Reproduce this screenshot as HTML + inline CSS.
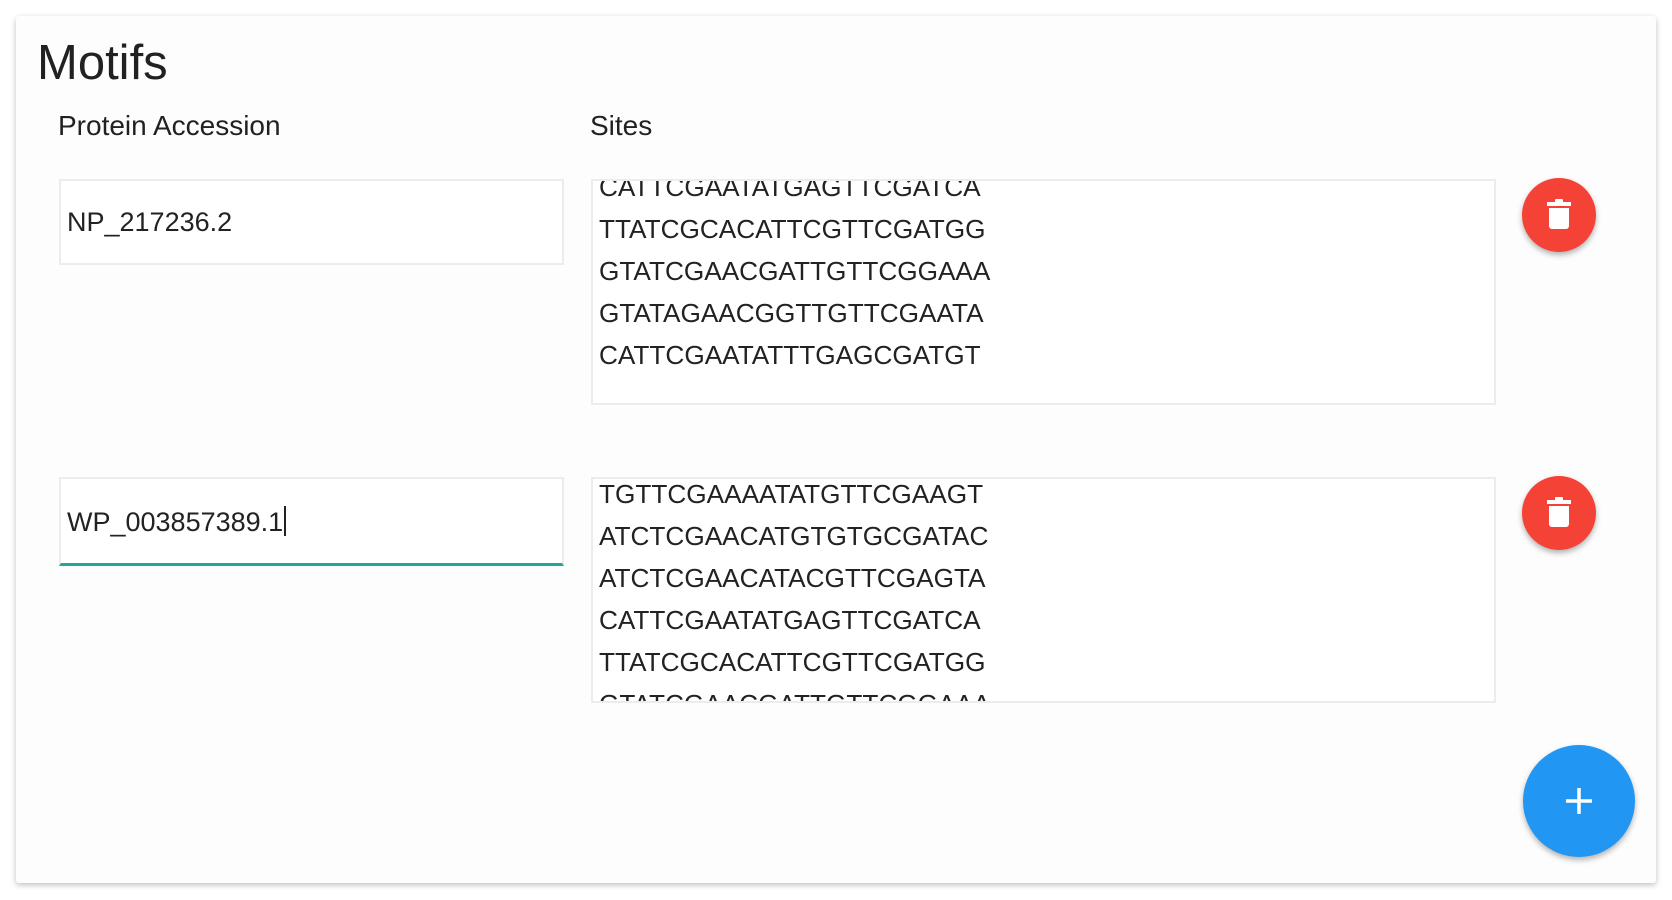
<!DOCTYPE html>
<html><head><style>
html,body{margin:0;padding:0;width:1672px;height:900px;background:#fff;overflow:hidden;font-family:"Liberation Sans",Arial,sans-serif;color:#222;}
.card{position:absolute;left:16px;top:16px;width:1640px;height:867px;background:#fdfdfd;box-shadow:0 2px 6px rgba(0,0,0,.25);border-radius:3px;}
.title{position:absolute;left:37px;top:35px;font-size:49px;color:#212121;}
.lbl{position:absolute;top:110px;font-size:28px;color:#212121;}
.box{position:absolute;background:#fff;border:2px solid #ececec;box-sizing:border-box;overflow:hidden;}
.inp{font-size:27px;padding-left:6px;line-height:1;}
.ta .in{position:absolute;left:6px;font-size:26.2px;line-height:42px;color:#222;}
.btn{position:absolute;border-radius:50%;box-shadow:0 3px 6px rgba(0,0,0,.3);}
.del{width:74px;height:74px;background:#f44336;}
.fab{width:112px;height:112px;background:#2196f3;}
</style></head><body>
<div class="card"></div>
<div class="title">Motifs</div>
<div class="lbl" style="left:58px">Protein Accession</div>
<div class="lbl" style="left:590px">Sites</div>

<div class="box inp" style="left:59px;top:179px;width:505px;height:86px;"><div style="position:absolute;left:6px;top:28px">NP_217236.2</div></div>
<div class="box ta" style="left:591px;top:179px;width:905px;height:226px;"><div class="in" style="top:-15px">CATTCGAATATGAGTTCGATCA<br>TTATCGCACATTCGTTCGATGG<br>GTATCGAACGATTGTTCGGAAA<br>GTATAGAACGGTTGTTCGAATA<br>CATTCGAATATTTGAGCGATGT</div></div>

<div class="box inp" style="left:59px;top:477px;width:505px;height:89px;border-bottom:3px solid #26a69a;"><div style="position:absolute;left:6px;top:27px">WP_003857389.1<span style="display:inline-block;width:2px;height:30px;background:#222;vertical-align:-5px;margin-left:1px"></span></div></div>
<div class="box ta" style="left:591px;top:477px;width:905px;height:226px;"><div class="in" style="top:-6px">TGTTCGAAAATATGTTCGAAGT<br>ATCTCGAACATGTGTGCGATAC<br>ATCTCGAACATACGTTCGAGTA<br>CATTCGAATATGAGTTCGATCA<br>TTATCGCACATTCGTTCGATGG<br>GTATCGAACGATTGTTCGGAAA</div></div>

<div class="btn del" style="left:1522px;top:178px"><svg width="74" height="74" viewBox="0 0 74 74"><rect x="25" y="24" width="24" height="4" fill="#fff"/><rect x="33" y="21" width="8" height="4" rx="1" fill="#fff"/><path d="M27 30h20v18a3 3 0 0 1-3 3H30a3 3 0 0 1-3-3z" fill="#fff"/></svg></div>
<div class="btn del" style="left:1522px;top:476px"><svg width="74" height="74" viewBox="0 0 74 74"><rect x="25" y="24" width="24" height="4" fill="#fff"/><rect x="33" y="21" width="8" height="4" rx="1" fill="#fff"/><path d="M27 30h20v18a3 3 0 0 1-3 3H30a3 3 0 0 1-3-3z" fill="#fff"/></svg></div>
<div class="btn fab" style="left:1523px;top:745px"><svg width="112" height="112" viewBox="0 0 112 112"><path d="M56 43v26M43 56h26" stroke="#fff" stroke-width="3.5"/></svg></div>
</body></html>
